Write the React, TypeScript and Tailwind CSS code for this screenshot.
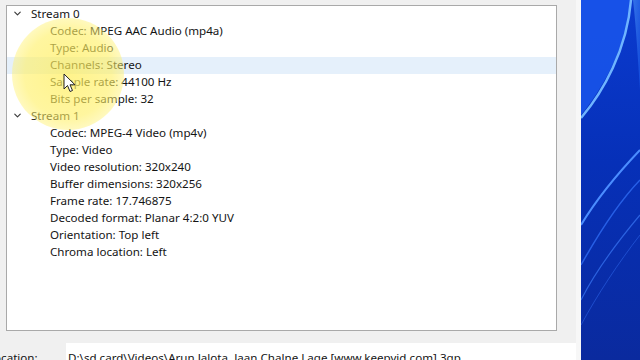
import { ChevronDown } from "lucide-react";

const streams = [
  {
    name: "Stream 0",
    items: [
      "Codec: MPEG AAC Audio (mp4a)",
      "Type: Audio",
      "Channels: Stereo",
      "Sample rate: 44100 Hz",
      "Bits per sample: 32",
    ],
  },
  {
    name: "Stream 1",
    items: [
      "Codec: MPEG-4 Video (mp4v)",
      "Type: Video",
      "Video resolution: 320x240",
      "Buffer dimensions: 320x256",
      "Frame rate: 17.746875",
      "Decoded format: Planar 4:2:0 YUV",
      "Orientation: Top left",
      "Chroma location: Left",
    ],
  },
];

function Wallpaper() {
  return (
    <div className="h-full w-[59px] overflow-hidden bg-[linear-gradient(180deg,#0b3bd0_0%,#0630b8_45%,#0a2a9e_100%)]">
      <svg width="59" height="360" viewBox="0 0 59 360">
        <defs>
          <linearGradient id="g1" x1="0" y1="0" x2="1" y2="1">
            <stop offset="0" stopColor="#5aa8ff" />
            <stop offset="1" stopColor="#1b5cf0" />
          </linearGradient>
        </defs>
        <path d="M50 0 C 45 50, 20 90, 0 115 L0 0 Z" fill="#1a58ee" opacity="0.8" />
        <path d="M50 0 C 46 50, 22 92, 0 118" stroke="#6fb4ff" strokeWidth="2.5" fill="none" />
        <path d="M59 150 C 40 170, 15 200, 0 225" stroke="#4b8dff" strokeWidth="2" fill="none" />
        <path d="M59 180 C 35 205, 14 240, 0 265" stroke="#2f6cf2" strokeWidth="1.5" fill="none" opacity="0.8" />
        <path d="M59 215 C 38 240, 15 270, 0 300" stroke="#3a78f5" strokeWidth="1.2" fill="none" opacity="0.7" />
        <path d="M59 235 C 38 262, 16 295, 0 325" stroke="#2c63e6" strokeWidth="1" fill="none" opacity="0.6" />
        <path d="M59 0 L59 90 C 57 60, 55 25, 52 0 Z" fill="url(#g1)" opacity="0.5" />
      </svg>
    </div>
  );
}

export default function App() {
  return (
    <div className="flex h-[360px] w-[640px] overflow-hidden bg-[#f0f0f0] font-['Noto_Sans',sans-serif] text-[11.6px] text-[#141414]">
      <div className="relative flex w-[581px] flex-col overflow-hidden bg-[#f0f0f0] pt-[5px] pl-[6px]">
        <div className="flex h-[326px] w-[551px] shrink-0 flex-col border border-[#a9a9a9] bg-white">
          {streams.map((s) => (
            <div key={s.name} className="flex flex-col">
              <div className="flex h-[17px] items-center pb-[2px]">
                <ChevronDown className="ml-[5px] h-[11px] w-[11px] text-[#3b3b3b]" strokeWidth={2.5} />
                <span className="ml-[8px] leading-none">{s.name}</span>
              </div>
              {s.items.map((it) => (
                <div
                  key={it}
                  className={`flex h-[17px] items-center pb-[2px] pl-[43px] leading-none ${
                    it === "Channels: Stereo" ? "bg-[#e5f0fb]" : ""
                  }`}
                >
                  {it}
                </div>
              ))}
            </div>
          ))}
        </div>
        <div className="mt-[12px] flex shrink-0 items-start">
          <span className="ml-[-18px] w-[78px] pt-[9px] leading-none">Location:</span>
          <div className="h-[20px] flex-1 bg-white pt-[9px] pl-[2px] leading-none">
            D:\sd card\Videos\Arun Jalota, Jaan Chalne Lage [www.keepvid.com].3gp
          </div>
        </div>
        <div className="absolute top-0 right-0 h-full w-[5px] bg-[#f7f7f7]" />

        <div className="pointer-events-none absolute left-[12px] top-[18px] h-[112px] w-[112px] rounded-full bg-[radial-gradient(circle,rgba(255,238,90,0.7)_0%,rgba(255,240,100,0.62)_55%,rgba(255,244,140,0.3)_85%,rgba(255,250,200,0)_100%)]" />
        <svg className="absolute left-[63px] top-[73px]" width="14" height="20" viewBox="0 0 14 20">
          <path d="M1 1 L1 16 L4.5 12.5 L7 18.5 L9.5 17.5 L7 11.8 L12 11.8 Z" fill="#ffffff" stroke="#222" strokeWidth="1" strokeLinejoin="round" />
        </svg>
      </div>
      <Wallpaper />
    </div>
  );
}
